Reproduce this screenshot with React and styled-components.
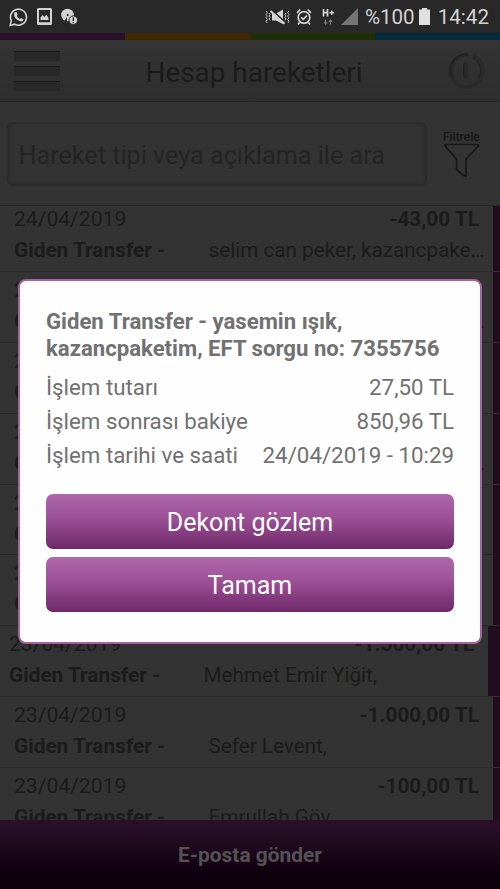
import styled, { createGlobalStyle } from "styled-components";

const GlobalStyle = createGlobalStyle`
  * {
    box-sizing: border-box;
  }
  body {
    margin: 0;
    background: #333333;
    font-family: Roboto, "Liberation Sans", sans-serif;
  }
`;

const Screen = styled.div`
  position: relative;
  display: flex;
  flex-direction: column;
  width: 500px;
  height: 889px;
  overflow: hidden;
  background: #333333;
  color: #1b1b1b;
  white-space: nowrap;
`;

const StatusBar = styled.div`
  display: flex;
  justify-content: space-between;
  height: 33px;
  padding: 0 11px 0 9px;
  background: #282828;
  color: #d2d2d2;
  font-size: 20.6px;
  line-height: 34px;
  svg {
    display: block;
  }
`;

const StatusGroup = styled.div`
  display: flex;
  align-items: center;
  gap: ${(props) => props.$gap}px;
`;

const Network = styled.div`
  display: flex;
  gap: 6px;
  padding: 0 1px 0 5px;
`;

const Battery = styled.div`
  padding: 0 2px 0 0;
  margin-left: -1px;
`;

const Stripes = styled.div`
  display: flex;
  height: 7px;
`;

const Stripe = styled.div`
  flex: 1;
  background: ${(props) => props.$color};
`;

const Header = styled.header`
  display: flex;
  align-items: center;
  justify-content: space-between;
  height: 62px;
  padding: 0 13px 0 14px;
  background: linear-gradient(#343434, #2d2d2d);
  border-bottom: 1px solid #272727;
`;

const MenuButton = styled.div`
  display: flex;
  flex-direction: column;
  gap: 5px;
  width: 46px;
  padding-top: 1px;
`;

const MenuLine = styled.div`
  height: 9.7px;
  background: #282828;
  border-top: 1px solid #1a1a1a;
`;

const Title = styled.h1`
  margin: 0 4px 0 5px;
  padding-top: 4px;
  font-size: 27.9px;
  font-weight: 400;
`;

const SearchArea = styled.div`
  display: flex;
  justify-content: space-between;
  height: 103px;
  padding: 20px 20px 0 7px;
`;

const SearchBox = styled.div`
  width: 420px;
  height: 64px;
  padding-left: 9.5px;
  border: 2px solid #2b2b2b;
  border-radius: 6px;
  box-shadow: inset 0 0 4px #2b2b2b;
  color: #242424;
  font-size: 25.2px;
  line-height: 63px;
`;

const Filter = styled.div`
  display: flex;
  flex-direction: column;
  align-items: center;
  width: 37px;
  padding-top: 8px;
  font-family: Inter, sans-serif;
  font-size: 11.2px;
  font-weight: 600;
  line-height: 14px;
  color: #171717;
  svg {
    margin-top: -2px;
  }
`;

const List = styled.div`
  flex: 1;
  overflow: hidden;
  border-top: 1px solid #282828;
`;

const Rows = styled.div`
  margin-top: -5px;
`;

const Row = styled.div`
  display: flex;
  height: 70.9px;
  margin-left: ${(props) => (props.$swiped ? -5 : 0)}px;
  border-bottom: 1px solid #292929;
`;

const RowBody = styled.div`
  flex: 1;
  min-width: 0;
  padding: 6px 6px 0 14px;
  font-size: 20.8px;
  line-height: 24px;
`;

const RowTop = styled.div`
  display: flex;
  justify-content: space-between;
  padding-right: 8px;
`;

const RowBottom = styled.div`
  display: flex;
  margin-top: 7px;
`;

const DateText = styled.span`
  font-size: 21.1px;
`;

const Amount = styled.span`
  font-weight: 700;
`;

const Kind = styled.span`
  width: 194.5px;
  flex-shrink: 0;
  font-weight: 700;
`;

const Detail = styled.span`
  flex: 1;
  margin-right: -1px;
  overflow: hidden;
  font-size: 20.7px;
  text-overflow: ellipsis;
`;

const RowMark = styled.div`
  width: ${(props) => (props.$swiped ? 12 : 7)}px;
  height: 71px;
  background: #220c20;
  border-bottom: 1px solid #3a293a;
`;

const Footer = styled.div`
  display: flex;
  align-items: center;
  justify-content: center;
  height: 69px;
  padding-top: 1px;
  background: linear-gradient(#2a1029, #1c081b 45%, #100010 75%, #090008);
  color: #555155;
  font-size: 20.9px;
  font-weight: 700;
`;

const Modal = styled.div`
  position: absolute;
  top: 279px;
  left: 18px;
  width: 464px;
  height: 365px;
  padding: 27px 26px 0;
  background: #fefefe;
  border: 2px solid #a563a0;
  border-radius: 8px;
  color: #717171;
`;

const ModalTitle = styled.div`
  font-size: 22.15px;
  font-weight: 700;
  line-height: 26.5px;
`;

const Info = styled.div`
  display: flex;
  justify-content: space-between;
  height: 34px;
  font-size: 22.3px;
  line-height: 34px;
`;

const Infos = styled.div`
  padding: 9px 0 22px;
`;

const Button = styled.div`
  height: 55px;
  margin-bottom: 8px;
  border-radius: 7px;
  background: linear-gradient(#b168ab, #9b5095 45%, #6e2869);
  color: #ffffff;
  font-size: 25px;
  line-height: 57px;
  text-align: center;
`;

const rows = [
  { date: "24/04/2019", amount: "-43,00 TL", detail: "selim can peker, kazancpaketim, EFT sorgu no" },
  { date: "24/04/2019", amount: "-27,50 TL", detail: "yasemin ışık, kazancpaketim, EFT sorgu no" },
  { date: "24/04/2019", amount: "-50,00 TL", detail: "" },
  { date: "24/04/2019", amount: "-35,00 TL", detail: "selim can peker, kazancpaketim, EFT sorgu no" },
  { date: "24/04/2019", amount: "-20,00 TL", detail: "" },
  { date: "23/04/2019", amount: "-75,00 TL", detail: "" },
  { date: "23/04/2019", amount: "-1.500,00 TL", detail: "Mehmet Emir Yiğit,", swiped: true },
  { date: "23/04/2019", amount: "-1.000,00 TL", detail: "Sefer Levent," },
  { date: "23/04/2019", amount: "-100,00 TL", detail: "Emrullah Göv" },
];

const infos = [
  { label: "İşlem tutarı", value: "27,50 TL" },
  { label: "İşlem sonrası bakiye", value: "850,96 TL" },
  { label: "İşlem tarihi ve saati", value: "24/04/2019 - 10:29" },
];

const WhatsappIcon = () => (
  <svg width="19" height="20" viewBox="0 0 19 20" fill="none" stroke="#d2d2d2">
    <path d="M1.2 18.4 2.3 13.7A8 8 0 1 1 5.7 17.2Z" strokeWidth="1.6" />
    <path
      d="M6 5.3 7.5 5 8.7 7.7 7.8 9Q8.9 11 10.8 12L12.1 10.9 14.5 12.2Q14.2 14.6 12 14.4 5.3 12.5 5 7.2 5 6 6 5.3Z"
      fill="#d2d2d2"
      stroke="none"
    />
  </svg>
);

const PictureIcon = () => (
  <svg width="15" height="17" viewBox="0 0 15 17">
    <path
      d="M1.5 0H13.5Q15 0 15 1.5V15.5Q15 17 13.5 17H1.5Q0 17 0 15.5V1.5Q0 0 1.5 0ZM2 2V14.3H13V2Z"
      fill="#d2d2d2"
      fillRule="evenodd"
    />
    <path d="M3.5 12V9.5L5.7 7 7.3 9 9.2 6.8 11.5 9.7V12Z" fill="#d2d2d2" />
  </svg>
);

const DiscIcon = () => (
  <svg width="17" height="17" viewBox="0 0 17 17">
    <circle cx="6.5" cy="7" r="6.3" fill="#d2d2d2" />
    <path d="M6 8.8 3.2 13.2 6 14Z" fill="#282828" />
    <circle cx="6.7" cy="7" r="1.1" fill="#282828" />
    <circle cx="12.3" cy="12.2" r="4.3" fill="#d2d2d2" stroke="#282828" strokeWidth="1" />
    <path d="M12.3 9.2V12.9M12.3 13.8V15.2" stroke="#282828" strokeWidth="1.3" />
  </svg>
);

const MuteIcon = () => (
  <svg width="25" height="18" viewBox="0 0 25 18" fill="none" stroke="#d2d2d2">
    <path d="M1 3 2.4 4.7 1 6.4 2.4 8.1 1 9.8 2.4 11.5 1 13.2 2 15M4 5 5 6.5 4 8 5 9.5 4 11 5 12.5" strokeWidth="0.9" />
    <path d="M24 3 22.6 4.7 24 6.4 22.6 8.1 24 9.8 22.6 11.5 24 13.2 23 15M21 5 20 6.5 21 8 20 9.5 21 11 20 12.5" strokeWidth="0.9" />
    <path d="M7 5.5H11L18 1.5V16L11 12.5H7Z" fill="#d2d2d2" stroke="none" />
    <path d="M6.5 1.8 20.5 14.5" stroke="#282828" strokeWidth="1.8" />
    <path d="M5.5 3 19.5 15.8" strokeWidth="2" />
  </svg>
);

const AlarmIcon = () => (
  <svg width="16" height="18" viewBox="0 0 16 18" fill="none" stroke="#d2d2d2" strokeWidth="1.7">
    <circle cx="8" cy="9.5" r="5.8" />
    <path d="M1 4.8 4.3 1.5M15 4.8 11.7 1.5M3.7 14.3 2 16.6M12.3 14.3 14 16.6M5.2 9.4 7.3 11.4 11 7.5" />
  </svg>
);

const NetworkIcon = () => (
  <svg width="13" height="18" viewBox="0 0 13 18" fill="none" stroke="#d2d2d2">
    <path d="M1.5 1V8.5M5.5 1V8.5M1.5 4.7H5.5" strokeWidth="1.7" />
    <path d="M7.5 4.8H12.2M9.8 2.5V7.1" strokeWidth="1.4" />
    <path d="M3.5 11.5V16M2 14 3.5 16 5 14M8.5 16.5V12M7 14 8.5 12 10 14" stroke="#777777" strokeWidth="1.2" />
  </svg>
);

const PowerIcon = () => (
  <svg width="40" height="40" viewBox="0 0 40 40" fill="none" strokeLinecap="round">
    <path d="M27.7 6A16 16 0 1 1 20 3.9" stroke="#2a2a2a" strokeWidth="4" />
    <path d="M20 3.5A15.5 15.5 0 0 0 5 26" stroke="#212121" strokeWidth="1.4" />
    <path d="M26.5 7.5A14 14 0 0 1 31.5 27" stroke="#242424" strokeWidth="1.2" />
    <path d="M18.5 14V25" stroke="#272727" strokeWidth="5" />
    <path d="M16.6 14V24" stroke="#222222" strokeWidth="1" />
  </svg>
);

const App = () => {
  return (
    <>
      <GlobalStyle />
      <Screen>
        <StatusBar>
          <StatusGroup $gap={9}>
            <WhatsappIcon />
            <PictureIcon />
            <DiscIcon />
          </StatusGroup>
          <StatusGroup $gap={5.5}>
            <MuteIcon />
            <AlarmIcon />
            <Network>
              <NetworkIcon />
              <svg width="17" height="17" viewBox="0 0 17 17">
                <path d="M17 0V17H0Z" fill="#747474" />
              </svg>
            </Network>
            <span>%100</span>
            <Battery>
              <svg width="11" height="17" viewBox="0 0 11 17">
                <path d="M3 0H8V1.5H11V17H0V1.5H3Z" fill="#e0e0e0" />
              </svg>
            </Battery>
            <span>14:42</span>
          </StatusGroup>
        </StatusBar>
        <Stripes>
          <Stripe $color="#2a1129" />
          <Stripe $color="#3f2803" />
          <Stripe $color="#202f07" />
          <Stripe $color="#052a3c" />
        </Stripes>
        <Header>
          <MenuButton>
            <MenuLine />
            <MenuLine />
            <MenuLine />
          </MenuButton>
          <Title>Hesap hareketleri</Title>
          <PowerIcon />
        </Header>
        <SearchArea>
          <SearchBox>Hareket tipi veya açıklama ile ara</SearchBox>
          <Filter>
            Filtrele
            <svg width="37" height="35" viewBox="0 0 37 35" fill="none" stroke="#171717" strokeWidth="1.7">
              <path d="M3 2.5H34Q36 2.5 35 4.3L23 17V34L20.5 33.5 13.5 27.5V17L2.2 4.3Q1 2.5 3 2.5Z" />
            </svg>
          </Filter>
        </SearchArea>
        <List>
          <Rows>
            {rows.map((row, i) => (
              <Row key={i} $swiped={row.swiped}>
                <RowBody>
                  <RowTop>
                    <DateText>{row.date}</DateText>
                    <Amount>{row.amount}</Amount>
                  </RowTop>
                  <RowBottom>
                    <Kind>Giden Transfer -</Kind>
                    <Detail>{row.detail}</Detail>
                  </RowBottom>
                </RowBody>
                <RowMark $swiped={row.swiped} />
              </Row>
            ))}
          </Rows>
        </List>
        <Footer>E-posta gönder</Footer>
        <Modal>
          <ModalTitle>
            Giden Transfer - yasemin ışık,
            <br />
            kazancpaketim, EFT sorgu no: 7355756
          </ModalTitle>
          <Infos>
            {infos.map((info) => (
              <Info key={info.label}>
                <span>{info.label}</span>
                <span>{info.value}</span>
              </Info>
            ))}
          </Infos>
          <Button>Dekont gözlem</Button>
          <Button>Tamam</Button>
        </Modal>
      </Screen>
    </>
  );
};

export default App;
